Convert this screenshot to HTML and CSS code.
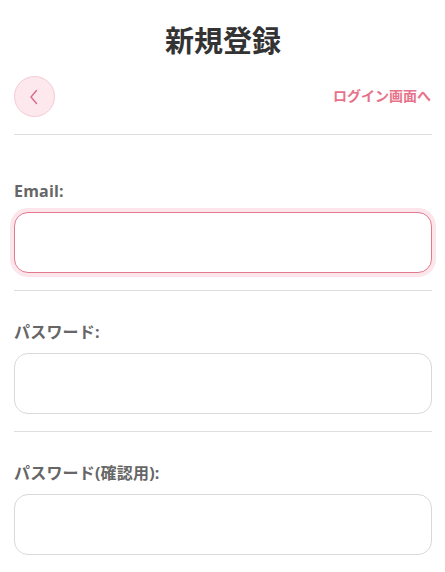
FILE: index.html
```html
<!DOCTYPE html>
<html lang="ja">
<head>
<meta charset="utf-8">
<title>新規登録</title>
<link rel="stylesheet" href="styles.css">
</head>
<body>
<div class="page">
  <h1 class="title">新規登録</h1>
  <div class="nav">
    <button class="back" type="button" aria-label="戻る">
      <svg width="14" height="18" viewBox="0 0 14 18"><path d="M9.5 2.5 L4 9 L9.5 15.5" fill="none" stroke="#d96b8c" stroke-width="1.4" stroke-linecap="round" stroke-linejoin="round"/></svg>
    </button>
    <a class="login" href="#">ログイン画面へ</a>
  </div>
  <hr class="sep">
  <div class="field first">
    <label class="label">Email:</label>
    <input class="input focus" type="email">
  </div>
  <hr class="sep">
  <div class="field">
    <label class="label">パスワード:</label>
    <input class="input" type="password">
  </div>
  <hr class="sep">
  <div class="field">
    <label class="label">パスワード(確認用):</label>
    <input class="input" type="password">
  </div>
  <hr class="sep">
</div>
</body>
</html>
```

FILE: styles.css
```css
html, body {
  margin: 0;
  padding: 0;
  background: #ffffff;
}
body {
  font-family: "Open Sans", "Noto Sans CJK JP", sans-serif;
  color: #333;
}
.page {
  padding: 0 13px 0 14px;
}
.title {
  margin: 0;
  padding-top: 18px;
  height: 44px;
  line-height: 42px;
  text-align: center;
  font-family: "Noto Sans CJK JP", sans-serif;
  font-size: 29px;
  font-weight: 700;
  color: #333;
}
.nav {
  margin-top: 14px;
  height: 41px;
  display: flex;
  align-items: center;
  justify-content: space-between;
}
.back {
  width: 41px;
  height: 41px;
  padding: 0;
  border-radius: 50%;
  border: 1px solid #f6cad5;
  background: #fde8ed;
  display: flex;
  align-items: center;
  justify-content: center;
  box-sizing: border-box;
}
.back svg { margin-left: -2px; }
.login {
  font-family: "Noto Sans CJK JP", sans-serif;
  font-size: 14px;
  font-weight: 700;
  color: #e8718a;
  text-decoration: none;
  margin-right: 1px;
  padding-bottom: 4px;
}
.sep {
  margin: 17px 0 0;
  border: 0;
  border-top: 1px solid #dedede;
  height: 0;
}
.field {
  padding-top: 31px;
  display: flex;
  flex-direction: column;
}
.field.first {
  padding-top: 46px;
}
.label {
  height: 20px;
  line-height: 20px;
  font-size: 16px;
  font-weight: 700;
  color: #666;
  font-family: "Open Sans", "Noto Sans CJK JP", sans-serif;
  letter-spacing: 0.2px;
}
.input {
  margin-top: 11px;
  height: 61px;
  box-sizing: border-box;
  border: 1px solid #d9d9d9;
  border-radius: 14px;
  background: #fff;
  outline: none;
  font-size: 16px;
  padding: 0 14px;
}
.input.focus {
  border: 1.5px solid #e07a8f;
  box-shadow: 0 0 0 4px #fde6eb;
}
```
